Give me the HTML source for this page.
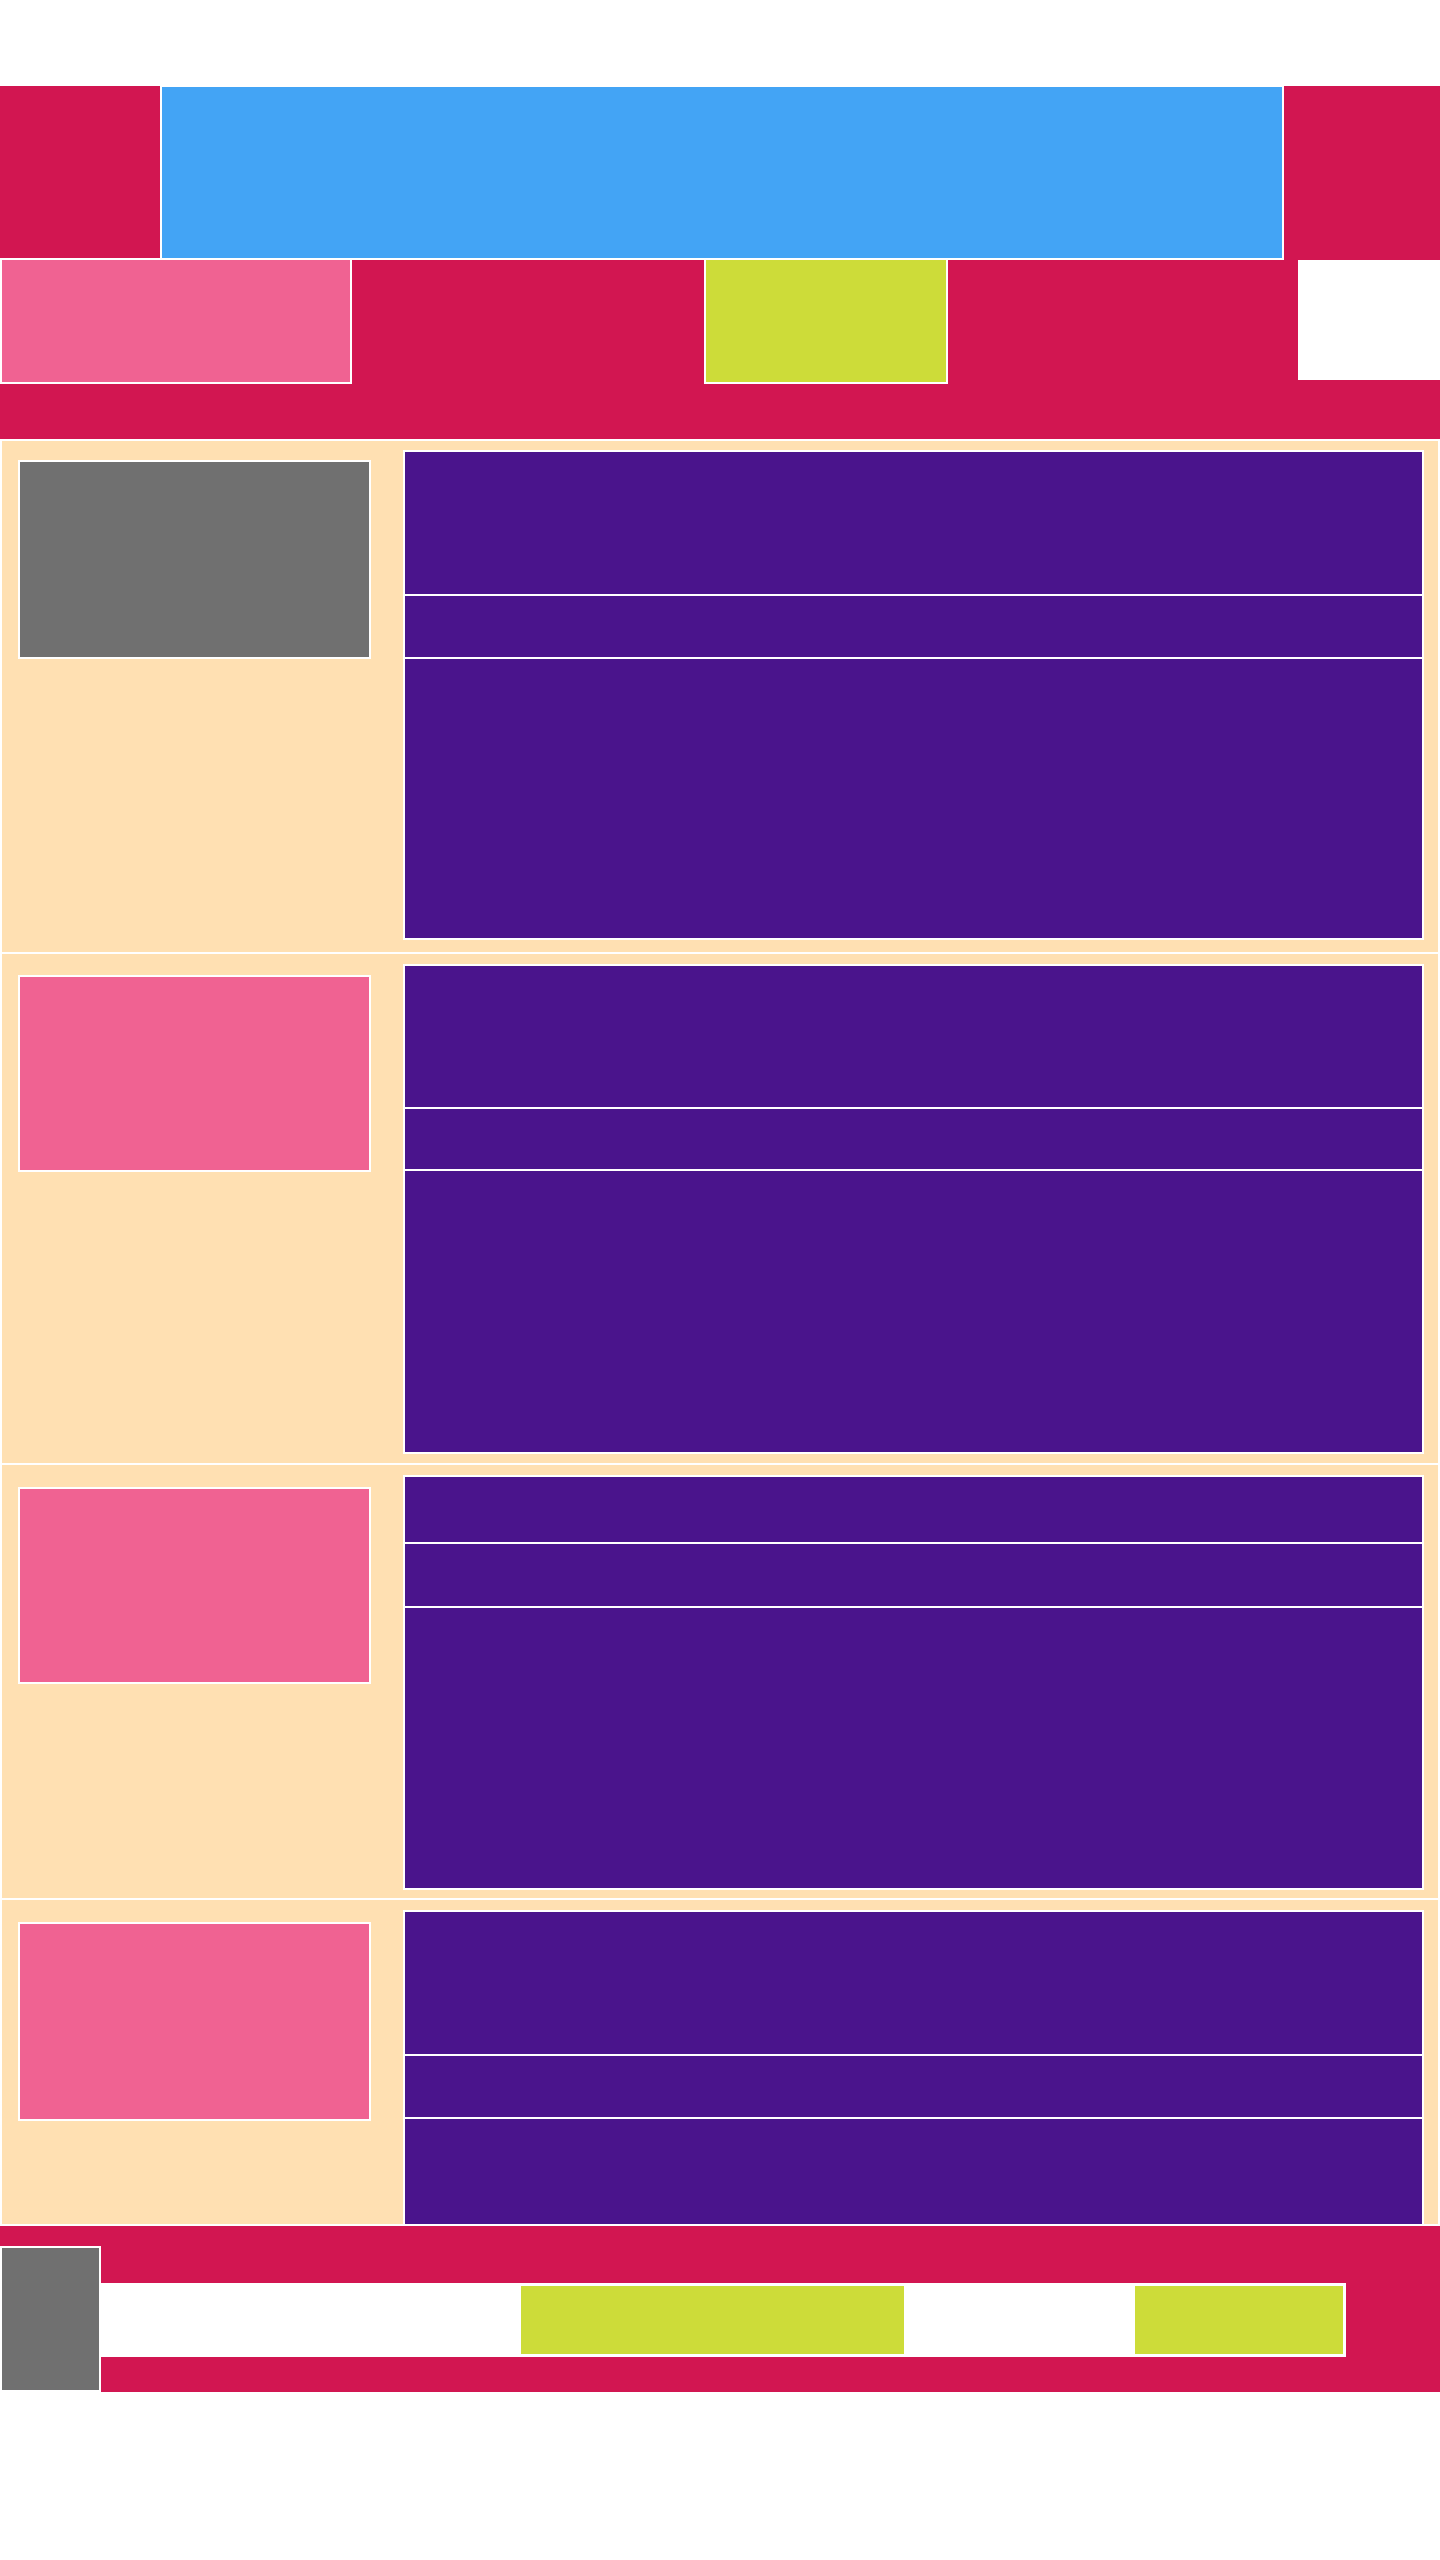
<!DOCTYPE html>
<html><head><style>
body{margin:0;width:1440px;height:2560px;background:#fff;position:relative;overflow:hidden}
div{position:absolute;box-sizing:border-box}
.r{background:#d21651}.b{background:#43a4f5;border:2px solid #fff}.p{background:#f06292;border:2px solid #fff}
.l{background:#cddc39;border:2px solid #fff}.pe{background:#ffe0b2;border:2px solid #fff}.pu{background:#4a148c;border:2px solid #fff}
.g{background:#707070;border:2px solid #fff}
</style></head><body>
<div class="r" style="left:0;top:86px;width:1440px;height:354px"></div>
<div class="b" style="left:160px;top:85px;width:1124px;height:175px"></div>
<div class="p" style="left:0;top:258px;width:352px;height:126px"></div>
<div class="l" style="left:704px;top:258px;width:244px;height:126px"></div>
<div style="left:1298px;top:260px;width:142px;height:120px;background:#fff"></div>

<div class="pe" style="left:0;top:439px;width:1440px;height:515px"></div>
<div class="g" style="left:18px;top:460px;width:353px;height:199px"></div>
<div class="pu" style="left:403px;top:450px;width:1021px;height:146px"></div>
<div class="pu" style="left:403px;top:594px;width:1021px;height:65px"></div>
<div class="pu" style="left:403px;top:657px;width:1021px;height:283px"></div>

<div class="pe" style="left:0;top:952px;width:1440px;height:513px"></div>
<div class="p" style="left:18px;top:975px;width:353px;height:197px"></div>
<div class="pu" style="left:403px;top:964px;width:1021px;height:145px"></div>
<div class="pu" style="left:403px;top:1107px;width:1021px;height:64px"></div>
<div class="pu" style="left:403px;top:1169px;width:1021px;height:285px"></div>

<div class="pe" style="left:0;top:1463px;width:1440px;height:437px"></div>
<div class="p" style="left:18px;top:1487px;width:353px;height:197px"></div>
<div class="pu" style="left:403px;top:1475px;width:1021px;height:69px"></div>
<div class="pu" style="left:403px;top:1542px;width:1021px;height:66px"></div>
<div class="pu" style="left:403px;top:1606px;width:1021px;height:284px"></div>

<div class="pe" style="left:0;top:1898px;width:1440px;height:328px"></div>
<div class="p" style="left:18px;top:1922px;width:353px;height:199px"></div>
<div class="pu" style="left:403px;top:1910px;width:1021px;height:146px"></div>
<div class="pu" style="left:403px;top:2054px;width:1021px;height:65px"></div>
<div class="pu" style="left:403px;top:2117px;width:1021px;height:109px"></div>

<div class="r" style="left:0;top:2226px;width:1440px;height:166px"></div>
<div class="g" style="left:0;top:2246px;width:101px;height:146px"></div>
<div style="left:100px;top:2283px;width:1246px;height:74px;background:#fff"></div>
<div style="left:521px;top:2286px;width:383px;height:68px;background:#cddc39"></div>
<div style="left:1135px;top:2286px;width:208px;height:68px;background:#cddc39"></div>
</body></html>
